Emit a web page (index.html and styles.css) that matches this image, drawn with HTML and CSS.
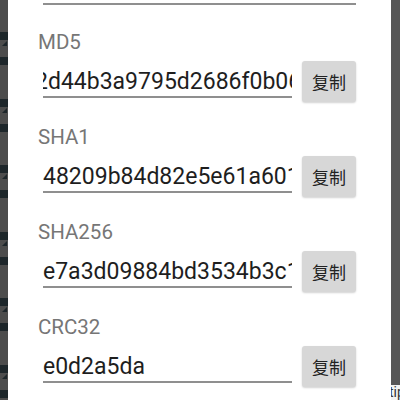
FILE: index.html
```html
<!DOCTYPE html>
<html>
<head>
<meta charset="utf-8">
<link rel="stylesheet" href="styles.css">
</head>
<body>
<div class="screen">
  <div class="left-strip">
    <div class="tile"><span class="tri"></span></div>
    <div class="tile"><span class="tri"></span></div>
    <div class="tile"><span class="tri"></span></div>
    <div class="tile"><span class="tri"></span></div>
    <div class="tile"><span class="tri"></span></div>
    <div class="tile"><span class="tri"></span></div>
  </div>
  <div class="dialog">
    <div class="top-line"></div>
    <div class="section">
      <div class="label">MD5</div>
      <div class="row">
        <div class="field"><div class="value scrolled">2d44b3a9795d2686f0b06e1c7a</div></div>
        <div class="btn">复制</div>
      </div>
    </div>
    <div class="section">
      <div class="label">SHA1</div>
      <div class="row">
        <div class="field"><div class="value">48209b84d82e5e61a6015c3e9f</div></div>
        <div class="btn">复制</div>
      </div>
    </div>
    <div class="section">
      <div class="label">SHA256</div>
      <div class="row">
        <div class="field"><div class="value">e7a3d09884bd3534b3c14f6a2d</div></div>
        <div class="btn">复制</div>
      </div>
    </div>
    <div class="section">
      <div class="label">CRC32</div>
      <div class="row">
        <div class="field"><div class="value">e0d2a5da</div></div>
        <div class="btn">复制</div>
      </div>
    </div>
  </div>
  <div class="right-strip">
    <div class="rs-dark"></div>
    <div class="rs-tip">tip</div>
  </div>
</div>
</body>
</html>
```

FILE: styles.css
```css
html, body {
  margin: 0;
  padding: 0;
}
body {
  width: 400px;
  height: 400px;
  overflow: hidden;
  background: #ffffff;
  font-family: Roboto, "Noto Sans", "Noto Sans CJK SC", sans-serif;
}
.screen {
  display: flex;
  width: 400px;
  height: 400px;
}
.left-strip {
  width: 8px;
  flex-shrink: 0;
  background: #4c4c4c;
  padding-top: 32px;
  overflow: hidden;
  display: flex;
  flex-direction: column;
}
.tile {
  flex-shrink: 0;
  height: 66.6px;
  background: linear-gradient(to bottom,
    #1d262a 0, #1d262a 8px,
    #4c4c4c 8px, #4c4c4c 25px,
    #1d262a 25px, #1d262a 33px,
    #4c4c4c 33px, #4c4c4c 100%);
}
.tri {
  display: block;
  width: 0;
  height: 0;
  margin-top: 9px;
  margin-left: 2px;
  border-left: 5px solid transparent;
  border-bottom: 5px solid #1d262a;
}
.dialog {
  flex: 1;
  background: #ffffff;
  padding: 0 35px 0 30px;
  display: flex;
  flex-direction: column;
  overflow: hidden;
}
.top-line {
  flex-shrink: 0;
  height: 3px;
  margin-left: 5px;
  margin-bottom: 2px;
  border-bottom: 2px solid #8f8f8f;
}
.section {
  flex-shrink: 0;
  margin-top: 23px;
}
.label {
  height: 24px;
  font-size: 20.5px;
  line-height: 24px;
  color: #767676;
}
.row {
  display: flex;
  align-items: flex-start;
  gap: 10px;
  margin-top: 7px;
}
.field {
  flex: 1;
  margin-left: 5px;
  padding: 8px 0 1px;
  border-bottom: 2px solid #8f8f8f;
  overflow: hidden;
  min-width: 0;
}
.value {
  font-size: 23px;
  line-height: 26px;
  color: #1e1e1e;
  white-space: nowrap;
  overflow: hidden;
}
.value.scrolled {
  text-indent: -8px;
}
.btn {
  flex-shrink: 0;
  width: 54px;
  height: 41px;
  background: #d7d7d7;
  border-radius: 3px;
  box-shadow: 0 1px 2px rgba(0, 0, 0, 0.18);
  display: flex;
  align-items: center;
  justify-content: center;
  font-family: "Noto Sans CJK SC", sans-serif;
  font-size: 17px;
  color: #222222;
}
.right-strip {
  width: 9px;
  flex-shrink: 0;
  display: flex;
  flex-direction: column;
}
.rs-dark {
  flex: 1;
  background: #575757;
}
.rs-tip {
  height: 15px;
  background: #f4f4f4;
  font-size: 14px;
  line-height: 15px;
  color: #333333;
  white-space: nowrap;
  overflow: hidden;
  text-indent: -2px;
}
```
